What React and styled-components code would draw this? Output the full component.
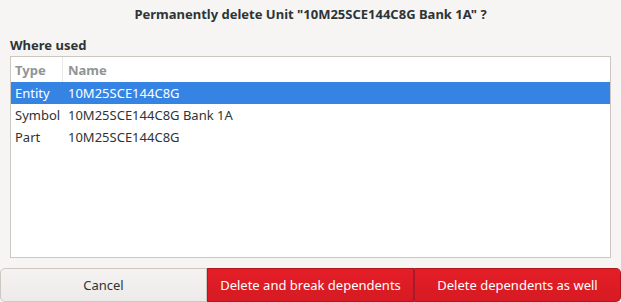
import React from "react";
import styled, { createGlobalStyle } from "styled-components";

const GlobalStyle = createGlobalStyle`
  html, body {
    margin: 0;
    padding: 0;
    background: #f6f5f4;
  }
  body {
    font-family: "Noto Sans", "DejaVu Sans", sans-serif;
    color: #2e3436;
  }
`;

const Dialog = styled.div`
  width: 621px;
  height: 302px;
  display: flex;
  flex-direction: column;
  background: #f6f5f4;
  overflow: hidden;
`;

const Title = styled.div`
  height: 28px;
  display: flex;
  align-items: center;
  justify-content: center;
  font-size: 13px;
  font-weight: bold;
  color: #2e3436;
`;

const Body = styled.div`
  flex: 1;
  display: flex;
  flex-direction: column;
  padding: 6px 10px 10px 10px;
`;

const Label = styled.div`
  font-size: 13px;
  font-weight: bold;
  height: 22px;
  display: flex;
  align-items: center;
`;

const ListBox = styled.div`
  flex: 1;
  background: #ffffff;
  border: 1px solid #cdc7c2;
  display: flex;
  flex-direction: column;
`;

const Row = styled.div`
  display: grid;
  grid-template-columns: 52px 1fr;
  height: ${(p) => (p.$header ? 25 : 22)}px;
  align-items: center;
  font-size: 13px;
  background: ${(p) => (p.$selected ? "#3584e4" : "transparent")};
  color: ${(p) => (p.$header ? "#919494" : p.$selected ? "#ffffff" : "#2e3436")};
  font-weight: ${(p) => (p.$header ? "bold" : "normal")};
`;

const Cell = styled.div`
  padding-left: ${(p) => (p.$first ? 4 : 5)}px;
  height: 100%;
  display: flex;
  align-items: center;
  white-space: nowrap;
  border-right: ${(p) => (p.$sep ? "1px solid #ebe9e7" : "none")};
`;

const ButtonBar = styled.div`
  display: flex;
  height: 34px;
`;

const Button = styled.button`
  flex: 1;
  font-family: inherit;
  font-size: 13px;
  margin: 0;
  cursor: pointer;
  border: 1px solid ${(p) => (p.$danger ? "#b2161d" : "#cdc7c2")};
  border-bottom-width: 1px;
  color: ${(p) => (p.$danger ? "#ffffff" : "#2e3436")};
  background: ${(p) =>
    p.$danger
      ? "linear-gradient(to bottom, #e41e27, #d61a23)"
      : "linear-gradient(to bottom, #f4f3f2, #edebe9)"};
  border-radius: 0;
  &:first-child {
    border-top-left-radius: 5px;
    border-bottom-left-radius: 5px;
  }
  &:last-child {
    border-top-right-radius: 5px;
    border-bottom-right-radius: 5px;
  }
  & + & {
    border-left-color: #a51d2d;
  }
`;

const rows = [
  { type: "Entity", name: "10M25SCE144C8G", selected: true },
  { type: "Symbol", name: "10M25SCE144C8G Bank 1A" },
  { type: "Part", name: "10M25SCE144C8G" },
];

export default function App() {
  return (
    <Dialog>
      <GlobalStyle />
      <Title>Permanently delete Unit "10M25SCE144C8G Bank 1A" ?</Title>
      <Body>
        <Label>Where used</Label>
        <ListBox>
          <Row $header>
            <Cell $first $sep>Type</Cell>
            <Cell>Name</Cell>
          </Row>
          {rows.map((r) => (
            <Row key={r.type} $selected={r.selected}>
              <Cell $first>{r.type}</Cell>
              <Cell>{r.name}</Cell>
            </Row>
          ))}
        </ListBox>
      </Body>
      <ButtonBar>
        <Button>Cancel</Button>
        <Button $danger>Delete and break dependents</Button>
        <Button $danger>Delete dependents as well</Button>
      </ButtonBar>
    </Dialog>
  );
}
